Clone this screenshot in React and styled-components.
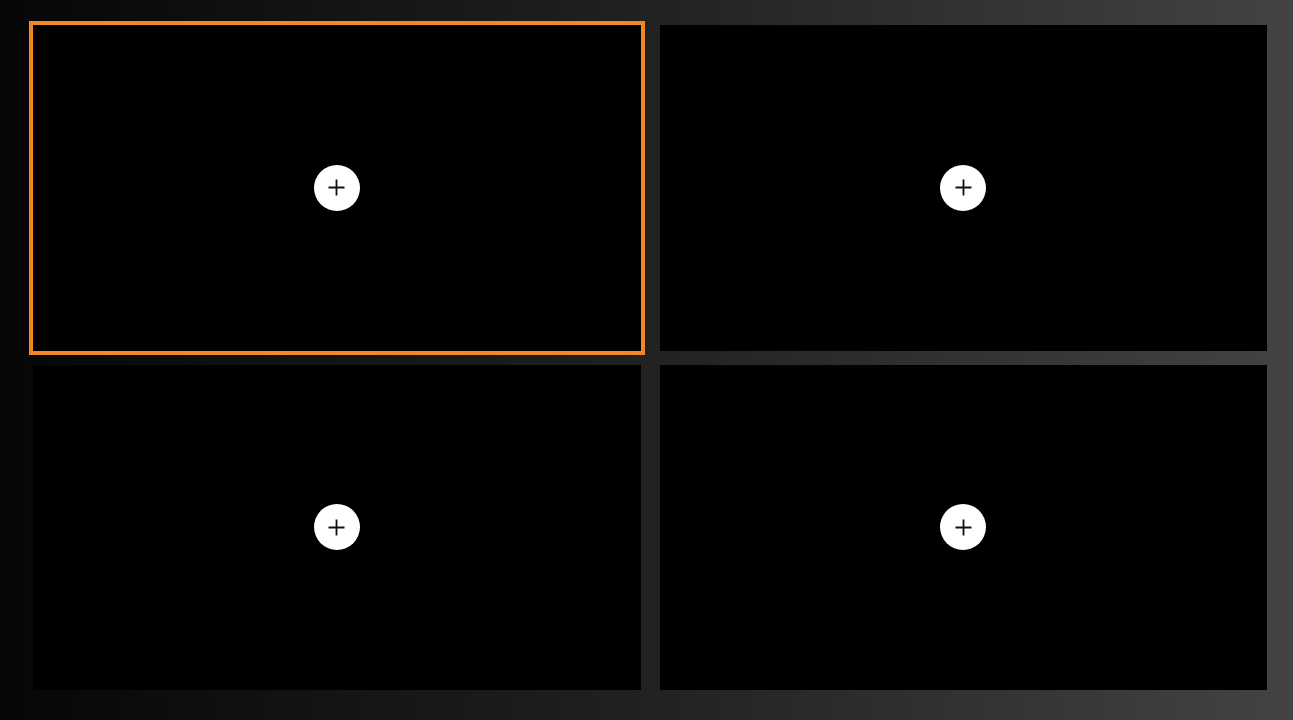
import React, { useState } from 'react';
import styled, { createGlobalStyle } from 'styled-components';

const GlobalStyle = createGlobalStyle`
	html, body {
		margin: 0;
		padding: 0;
		background: #060606;
		font-family: 'Inter', 'Liberation Sans', sans-serif;
	}
	* {
		box-sizing: border-box;
	}
`;

function PlusIcon() {
	return (
		<svg width="17" height="17" viewBox="0 0 17 17" fill="none">
			<path d="M8.5 0.5v16M0.5 8.5h16" stroke="#111" strokeWidth="1.8" />
		</svg>
	);
}

function Slot({ active, onSelect }) {
	return (
		<Tile active={active} onClick={onSelect}>
			<AddButton aria-label="Add source">
				<PlusIcon />
			</AddButton>
		</Tile>
	);
}

export default function App() {
	const [selected, setSelected] = useState(0);
	const slots = [0, 1, 2, 3];

	return (
		<>
			<GlobalStyle />
			<Stage>
				<Grid>
					{slots.map((i) => (
						<Slot key={i} active={selected === i} onSelect={() => setSelected(i)} />
					))}
				</Grid>
			</Stage>
		</>
	);
}

const Stage = styled.div`
	width: 100%;
	height: 720px;
	padding: 25px 26px 30px 33px;
	background: linear-gradient(to right, #060606 0%, #1e1e1e 45%, #434343 100%);
`;
const Grid = styled.div`
	display: grid;
	grid-template-columns: 1fr 1fr;
	grid-template-rows: 1fr 1fr;
	column-gap: 19px;
	row-gap: 14px;
	height: 100%;
`;
const Tile = styled.div`
	background: #000;
	display: flex;
	align-items: center;
	justify-content: center;
	cursor: pointer;
	outline: ${(props) => (props.active ? '4px solid #f0882a' : 'none')};
`;
const AddButton = styled.button`
	width: 46px;
	height: 46px;
	border-radius: 50%;
	border: none;
	padding: 0;
	background: #fff;
	display: flex;
	align-items: center;
	justify-content: center;
	cursor: pointer;
`;
